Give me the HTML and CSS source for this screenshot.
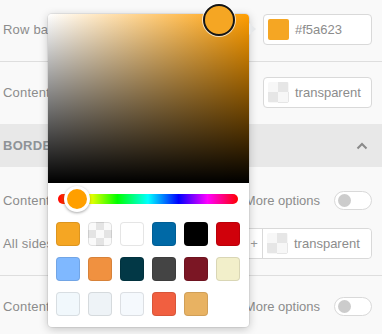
FILE: index.html
```html
<!DOCTYPE html>
<html>
<head>
<meta charset="utf-8">
<link rel="stylesheet" href="styles.css">
</head>
<body>
<div class="panel">
  <div class="row r1">
    <span class="label">Row background color</span>
    <div class="field"><span class="sw sw-orange"></span><span class="val">#f5a623</span></div>
  </div>
  <div class="row r2">
    <span class="label">Content background</span>
    <div class="field"><span class="sw sw-checker"></span><span class="val">transparent</span></div>
  </div>
  <div class="section-head">
    <span>BORDERS</span>
    <svg class="chev" width="12" height="8" viewBox="0 0 12 8"><path d="M1.5 6.5 L6 2 L10.5 6.5" fill="none" stroke="#8a8a8a" stroke-width="2"/></svg>
  </div>
  <div class="row r3">
    <span class="label">Content border</span>
    <div class="opt"><span>More options</span><span class="toggle"><span class="knob"></span></span></div>
  </div>
  <div class="row r4">
    <span class="label">All sides</span>
    <div class="group">
      <span class="num">1px</span>
      <span class="plus">+</span>
      <div class="field inner"><span class="sw sw-checker"></span><span class="val">transparent</span></div>
    </div>
  </div>
  <div class="row r5">
    <span class="label">Content shadow</span>
    <div class="opt"><span>More options</span><span class="toggle"><span class="knob"></span></span></div>
  </div>
</div>

<div class="picker">
  <span class="arrow"></span>
  <div class="sat"><span class="sat-handle"></span></div>
  <div class="hue"><span class="hue-handle"></span></div>
  <div class="swatches">
    <span class="c c1"></span><span class="c c2"></span><span class="c c3"></span><span class="c c4"></span><span class="c c5"></span><span class="c c6"></span>
    <span class="c c7"></span><span class="c c8"></span><span class="c c9"></span><span class="c c10"></span><span class="c c11"></span><span class="c c12"></span>
    <span class="c c13"></span><span class="c c14"></span><span class="c c15"></span><span class="c c16"></span><span class="c c17"></span>
  </div>
</div>
</body>
</html>
```
FILE: styles.css
```css
* { box-sizing: border-box; }
body {
  margin: 0;
  width: 382px;
  height: 334px;
  overflow: hidden;
  position: relative;
  background: #f9f9f9;
  font-family: "Liberation Sans", Arial, sans-serif;
  font-size: 13px;
  color: #8c8c8c;
}
.panel { display: flex; flex-direction: column; }
.row {
  display: flex;
  align-items: center;
  justify-content: space-between;
  padding-left: 3px;
  padding-right: 10px;
}
.label { white-space: nowrap; letter-spacing: 0.2px; }
.r1 { padding-top: 14px; padding-bottom: 16px; border-bottom: 1px solid #dedede; }
.r2 { padding-top: 15px; padding-bottom: 16px; }
.section-head {
  height: 43px;
  background: #e8e8e8;
  display: flex;
  align-items: center;
  justify-content: space-between;
  padding: 0 14px 0 3px;
  font-weight: bold;
  font-size: 13px;
  color: #8e9397;
  letter-spacing: 0.3px;
}
.chev { display: block; }
.r3 { height: 34px; margin-top: 16px; }
.r4 { margin-top: 11px; padding-bottom: 16px; border-bottom: 1px solid #dedede; }
.r5 { height: 60px; }
.field {
  width: 109px;
  height: 31px;
  border: 1px solid #d9d9d9;
  border-radius: 4px;
  background: #fff;
  display: flex;
  align-items: center;
  padding-left: 4px;
  gap: 6px;
}
.sw { width: 21px; height: 21px; border-radius: 2px; flex: none; }
.sw-orange { background: #f5a623; }
.sw-checker {
  background-color: #f7f7f7;
  background-image:
    linear-gradient(45deg, #e6e6e6 25%, transparent 25%, transparent 75%, #e6e6e6 75%),
    linear-gradient(45deg, #e6e6e6 25%, transparent 25%, transparent 75%, #e6e6e6 75%);
  background-size: 20px 20px;
  background-position: 0 0, 10px 10px;
}
.opt { display: flex; align-items: center; gap: 14px; }
.toggle {
  width: 38px;
  height: 19px;
  border: 1px solid #d9d9d9;
  border-radius: 10px;
  background: #fff;
  display: flex;
  align-items: center;
  padding-left: 3px;
}
.knob { width: 13px; height: 13px; border-radius: 50%; background: #cccccc; }
.group {
  display: flex;
  align-items: stretch;
  height: 31px;
  border: 1px solid #d9d9d9;
  border-radius: 4px;
  background: #fff;
}
.num { width: 60px; display: flex; align-items: center; padding-left: 8px; }
.plus { width: 17px; display: flex; align-items: center; justify-content: center; color: #999; border-right: 1px solid #d9d9d9; }
.field.inner { border: none; width: 108px; height: 29px; border-radius: 0 4px 4px 0; }

.picker {
  position: absolute;
  left: 48px;
  top: 14px;
  width: 201px;
  height: 313px;
  background: #fff;
  border-radius: 4px;
  box-shadow: 0 2px 10px rgba(0,0,0,0.22), 0 0 0 1px rgba(0,0,0,0.06);
}
.arrow {
  position: absolute;
  right: -7px;
  top: 9px;
  width: 0;
  height: 0;
  border-top: 6px solid transparent;
  border-bottom: 6px solid transparent;
  border-left: 7px solid #e6e8ea;
}
.sat {
  position: relative;
  height: 169px;
  border-radius: 4px 4px 0 0;
  background:
    linear-gradient(to top, #000, rgba(0,0,0,0)),
    linear-gradient(to right, #fff, hsl(37, 100%, 50%));
}
.sat-handle {
  position: absolute;
  left: 155px;
  top: -10px;
  width: 32px;
  height: 32px;
  border-radius: 50%;
  background: #f5a623;
  border: 2px solid #151515;
  box-shadow: 0 0 0 1px rgba(255,255,255,0.7);
}
.hue {
  position: relative;
  height: 10px;
  margin: 11px 11px 0 10px;
  border-radius: 5px;
  background: linear-gradient(to right, #f00 0%, #ff0 17%, #0f0 33%, #0ff 50%, #00f 67%, #f0f 83%, #f00 100%);
}
.hue-handle {
  position: absolute;
  left: 6px;
  top: -8px;
  width: 26px;
  height: 26px;
  border-radius: 50%;
  background: #ff9f00;
  border: 3px solid #fff;
  box-shadow: 0 1px 3px rgba(0,0,0,0.35);
}
.swatches {
  display: grid;
  grid-template-columns: repeat(6, 24px);
  column-gap: 8px;
  row-gap: 11px;
  padding: 0 0 0 8px;
  margin-top: 18px;
}
.c {
  width: 24px;
  height: 24px;
  border-radius: 4px;
  box-shadow: inset 0 0 0 1px rgba(0,0,0,0.1);
}
.c1 { background: #f5a623; }
.c2 {
  background-color: #fafafa;
  background-image:
    linear-gradient(45deg, #e4e4e4 25%, transparent 25%, transparent 75%, #e4e4e4 75%),
    linear-gradient(45deg, #e4e4e4 25%, transparent 25%, transparent 75%, #e4e4e4 75%);
  background-size: 16px 16px;
  background-position: 0 0, 8px 8px;
}
.c3 { background: #ffffff; }
.c4 { background: #0069a6; }
.c5 { background: #000000; }
.c6 { background: #d0010b; }
.c7 { background: #7fb8ff; }
.c8 { background: #f09140; }
.c9 { background: #023846; }
.c10 { background: #444444; }
.c11 { background: #7b1624; }
.c12 { background: #f2efca; }
.c13 { background: #f1f8fc; }
.c14 { background: #eef3f7; }
.c15 { background: #f5f9fd; }
.c16 { background: #f15f40; }
.c17 { background: #e8b262; }
```
